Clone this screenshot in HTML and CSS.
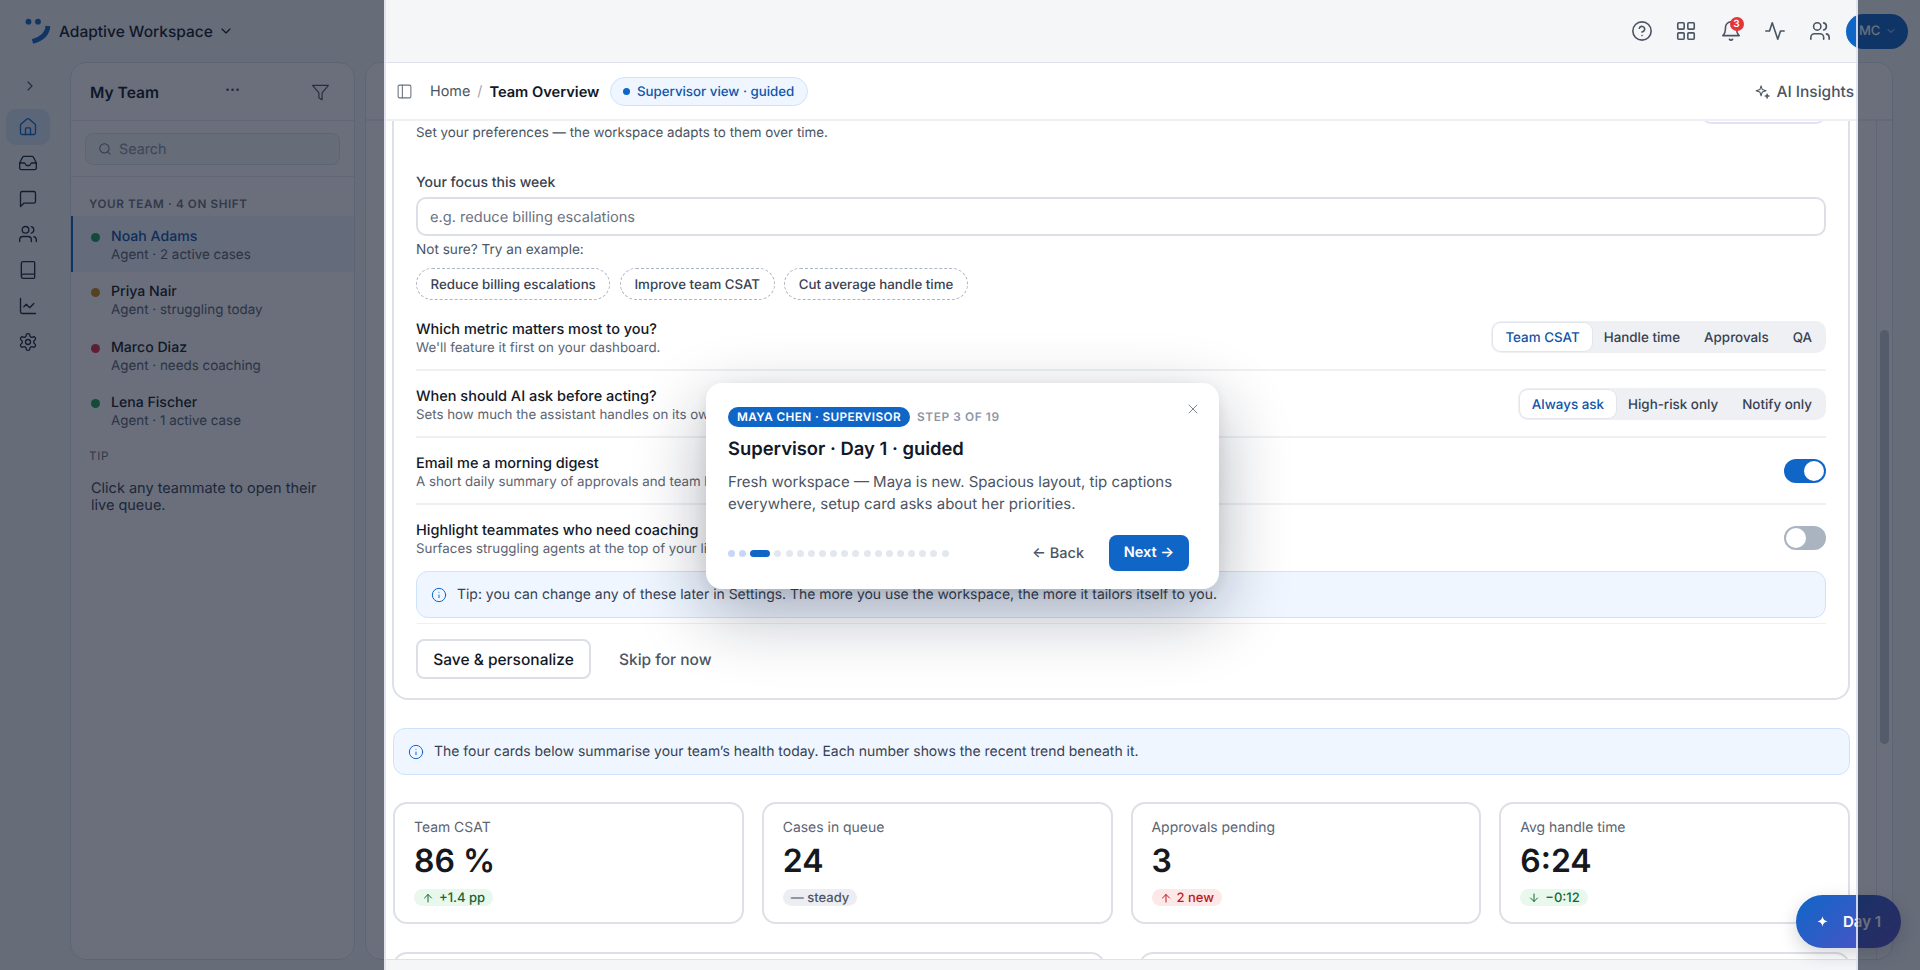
FILE: index.html
```html
<!DOCTYPE html>
<html lang="en">
<head>
<meta charset="utf-8">
<title>Adaptive Workspace</title>
<link rel="stylesheet" href="styles.css">
</head>
<body>
<div class="app">
  <header class="topbar">
    <div class="brand">
      <svg class="logo" viewBox="0 0 28 28"><circle cx="4.5" cy="4.7" r="2.9" class="fill"/><circle cx="14" cy="4.7" r="2.9" class="fill"/><path d="M24 9c-.4 7-5 12.500-15.500 15.500" class="arc"/></svg>
      <span class="brand-name">Adaptive Workspace</span>
      <svg class="ic chev" viewBox="0 0 24 24"><path d="m6 9 6 6 6-6"/></svg>
    </div>
    <div class="top-actions">
      <svg class="ic top-ic" viewBox="0 0 24 24"><circle cx="12" cy="12" r="10"/><path d="M9.090 9a3 3 0 0 1 5.830 1c0 2-3 3-3 3"/><path d="M12 17h.01"/></svg>
      <svg class="ic top-ic" viewBox="0 0 24 24"><rect x="3" y="3" width="7" height="7" rx="1"/><rect x="14" y="3" width="7" height="7" rx="1"/><rect x="14" y="14" width="7" height="7" rx="1"/><rect x="3" y="14" width="7" height="7" rx="1"/></svg>
      <span class="bell">
        <svg class="ic top-ic" viewBox="0 0 24 24"><path d="M6 8a6 6 0 0 1 12 0c0 7 3 9 3 9H3s3-2 3-9"/><path d="M10.300 21a1.940 1.940 0 0 0 3.400 0"/></svg>
        <span class="badge">3</span>
      </span>
      <svg class="ic top-ic" viewBox="0 0 24 24"><path d="M22 12h-4l-3 9L9 3l-3 9H2"/></svg>
      <svg class="ic top-ic" viewBox="0 0 24 24"><path d="M16 21v-2a4 4 0 0 0-4-4H6a4 4 0 0 0-4 4v2"/><circle cx="9" cy="7" r="4"/><path d="M22 21v-2a4 4 0 0 0-3-3.870"/><path d="M16 3.130a4 4 0 0 1 0 7.750"/></svg>
      <div class="avatar"><span>MC</span><svg class="ic" viewBox="0 0 24 24"><path d="m6 9 6 6 6-6"/></svg></div>
    </div>
  </header>

  <div class="workspace">
    <nav class="rail">
      <svg class="ic rail-toggle" viewBox="0 0 24 24"><path d="m9 18 6-6-6-6"/></svg>
      <a class="rail-item active"><svg class="ic" viewBox="0 0 24 24"><path d="M15 21v-7a1 1 0 0 0-1-1h-4a1 1 0 0 0-1 1v7"/><path d="M3 10a2 2 0 0 1 .709-1.528l7-5.999a2 2 0 0 1 2.582 0l7 5.999A2 2 0 0 1 21 10v9a2 2 0 0 1-2 2H5a2 2 0 0 1-2-2z"/></svg></a>
      <a class="rail-item"><svg class="ic" viewBox="0 0 24 24"><polyline points="22 12 16 12 14 15 10 15 8 12 2 12"/><path d="M5.450 5.110 2 12v6a2 2 0 0 0 2 2h16a2 2 0 0 0 2-2v-6l-3.450-6.890A2 2 0 0 0 16.760 4H7.240a2 2 0 0 0-1.790 1.110z"/></svg></a>
      <a class="rail-item"><svg class="ic" viewBox="0 0 24 24"><path d="M21 15a2 2 0 0 1-2 2H7l-4 4V5a2 2 0 0 1 2-2h14a2 2 0 0 1 2 2z"/></svg></a>
      <a class="rail-item"><svg class="ic" viewBox="0 0 24 24"><path d="M16 21v-2a4 4 0 0 0-4-4H6a4 4 0 0 0-4 4v2"/><circle cx="9" cy="7" r="4"/><path d="M22 21v-2a4 4 0 0 0-3-3.870"/><path d="M16 3.130a4 4 0 0 1 0 7.750"/></svg></a>
      <a class="rail-item"><svg class="ic" viewBox="0 0 24 24"><path d="M4 19.500v-15A2.500 2.500 0 0 1 6.500 2H19a1 1 0 0 1 1 1v18a1 1 0 0 1-1 1H6.500a1 1 0 0 1 0-5H20"/></svg></a>
      <a class="rail-item"><svg class="ic" viewBox="0 0 24 24"><path d="M3 3v16a2 2 0 0 0 2 2h16"/><path d="m19 9-5 5-4-4-3 3"/></svg></a>
      <a class="rail-item"><svg class="ic" viewBox="0 0 24 24"><path d="M12.220 2h-.44a2 2 0 0 0-2 2v.18a2 2 0 0 1-1 1.730l-.43.25a2 2 0 0 1-2 0l-.15-.08a2 2 0 0 0-2.730.73l-.22.38a2 2 0 0 0 .73 2.730l.15.1a2 2 0 0 1 1 1.720v.51a2 2 0 0 1-1 1.740l-.15.09a2 2 0 0 0-.73 2.730l.22.38a2 2 0 0 0 2.730.73l.15-.08a2 2 0 0 1 2 0l.43.25a2 2 0 0 1 1 1.730V20a2 2 0 0 0 2 2h.44a2 2 0 0 0 2-2v-.18a2 2 0 0 1 1-1.730l.43-.25a2 2 0 0 1 2 0l.15.08a2 2 0 0 0 2.730-.73l.22-.39a2 2 0 0 0-.73-2.730l-.15-.08a2 2 0 0 1-1-1.740v-.5a2 2 0 0 1 1-1.740l.15-.09a2 2 0 0 0 .73-2.730l-.22-.38a2 2 0 0 0-2.730-.73l-.15.08a2 2 0 0 1-2 0l-.43-.25a2 2 0 0 1-1-1.730V4a2 2 0 0 0-2-2z"/><circle cx="12" cy="12" r="3"/></svg></a>
    </nav>

    <aside class="team">
      <div class="team-head">
        <h2>My Team</h2>
        <span class="more">···</span>
        <svg class="ic filter" viewBox="0 0 24 24"><polygon points="22 3 2 3 10 12.460 10 19 14 21 14 12.460 22 3"/></svg>
      </div>
      <div class="team-search">
        <div class="search-box">
          <svg class="ic" viewBox="0 0 24 24"><circle cx="11" cy="11" r="8"/><path d="m21 21-4.300-4.300"/></svg>
          <span>Search</span>
        </div>
      </div>
      <div class="section-label">YOUR TEAM · 4 ON SHIFT</div>
      <div class="member selected"><i class="dot green"></i><div><b>Noah Adams</b><small>Agent · 2 active cases</small></div></div>
      <div class="member"><i class="dot amber"></i><div><b>Priya Nair</b><small>Agent · struggling today</small></div></div>
      <div class="member"><i class="dot red"></i><div><b>Marco Diaz</b><small>Agent · needs coaching</small></div></div>
      <div class="member"><i class="dot green"></i><div><b>Lena Fischer</b><small>Agent · 1 active case</small></div></div>
      <div class="tip-label">TIP</div>
      <p class="tip-text">Click any teammate to open their live queue.</p>
    </aside>

    <main class="main">
      <div class="main-head">
        <svg class="ic panel-ic" viewBox="0 0 24 24"><rect x="3" y="3" width="18" height="18" rx="2"/><path d="M9 3v18"/></svg>
        <span class="crumb">Home</span>
        <span class="slash">/</span>
        <span class="crumb-now">Team Overview</span>
        <span class="view-pill"><i></i>Supervisor view · guided</span>
        <span class="insights">
          <svg class="ic" viewBox="0 0 24 24"><path d="m10 4 1.700 5.300L17 11l-5.300 1.700L10 18l-1.700-5.300L3 11l5.300-1.700z"/><path d="m18.500 15.500.7 2.300 2.300.7-2.300.7-.7 2.300-.7-2.300-2.300-.7 2.300-.7z"/></svg>
          AI Insights
        </span>
      </div>
      <div class="main-body">
        <div class="scroller">
          <section class="setup">
            <div class="setup-head">
              <p>Set your preferences — the workspace adapts to them over time.</p>
              <span class="setup-btn"></span>
            </div>
            <label class="field-label">Your focus this week</label>
            <div class="text-input">e.g. reduce billing escalations</div>
            <div class="hint">Not sure? Try an example:</div>
            <div class="chips">
              <span class="chip">Reduce billing escalations</span>
              <span class="chip">Improve team CSAT</span>
              <span class="chip">Cut average handle time</span>
            </div>
            <div class="pref">
              <div><h4>Which metric matters most to you?</h4><p>We'll feature it first on your dashboard.</p></div>
              <div class="seg"><span class="on">Team CSAT</span><span>Handle time</span><span>Approvals</span><span>QA</span></div>
            </div>
            <div class="pref">
              <div><h4>When should AI ask before acting?</h4><p>Sets how much the assistant handles on its own.</p></div>
              <div class="seg"><span class="on">Always ask</span><span>High-risk only</span><span>Notify only</span></div>
            </div>
            <div class="pref">
              <div><h4>Email me a morning digest</h4><p>A short daily summary of approvals and team health.</p></div>
              <span class="toggle on"><i></i></span>
            </div>
            <div class="pref last">
              <div><h4>Highlight teammates who need coaching</h4><p>Surfaces struggling agents at the top of your list.</p></div>
              <span class="toggle"><i></i></span>
            </div>
            <div class="note">
              <svg class="ic" viewBox="0 0 24 24"><circle cx="12" cy="12" r="10"/><path d="M12 16v-4"/><path d="M12 8h.01"/></svg>
              Tip: you can change any of these later in Settings. The more you use the workspace, the more it tailors itself to you.
            </div>
            <div class="setup-actions">
              <span class="btn-save">Save &amp; personalize</span>
              <span class="btn-skip">Skip for now</span>
            </div>
          </section>

          <div class="note wide">
            <svg class="ic" viewBox="0 0 24 24"><circle cx="12" cy="12" r="10"/><path d="M12 16v-4"/><path d="M12 8h.01"/></svg>
            The four cards below summarise your team’s health today. Each number shows the recent trend beneath it.
          </div>

          <div class="kpis">
            <div class="kpi"><span class="kpi-label">Team CSAT</span><strong>86 %</strong><span class="trend good"><svg class="ic" viewBox="0 0 24 24"><path d="M12 20V5"/><path d="m5 12 7-7 7 7"/></svg>+1.4 pp</span></div>
            <div class="kpi"><span class="kpi-label">Cases in queue</span><strong>24</strong><span class="trend flat">— steady</span></div>
            <div class="kpi"><span class="kpi-label">Approvals pending</span><strong>3</strong><span class="trend bad"><svg class="ic" viewBox="0 0 24 24"><path d="M12 20V5"/><path d="m5 12 7-7 7 7"/></svg>2 new</span></div>
            <div class="kpi"><span class="kpi-label">Avg handle time</span><strong>6:24</strong><span class="trend good"><svg class="ic" viewBox="0 0 24 24"><path d="M12 4v15"/><path d="m5 12 7 7 7-7"/></svg>−0:12</span></div>
          </div>

          <div class="lower">
            <div class="lower-card"></div>
            <div class="lower-card"></div>
          </div>
        </div>
        <div class="gutter"><span class="thumb"></span></div>
      </div>
    </main>
  </div>
</div>

<button class="fab">
  <svg viewBox="0 0 24 24"><path d="M12 2.500c.8 5.700 3.800 8.700 9.500 9.500-5.700.8-8.700 3.800-9.500 9.500-.8-5.700-3.800-8.700-9.500-9.500 5.700-.8 8.700-3.800 9.500-9.500z"/></svg>
  Day 1
</button>

<div class="spotlight"></div>

<div class="coach">
  <button class="coach-close"><svg class="ic" viewBox="0 0 24 24"><path d="M18 6 6 18"/><path d="m6 6 12 12"/></svg></button>
  <div class="coach-tags"><span class="persona">MAYA CHEN · SUPERVISOR</span><span class="step">STEP 3 OF 19</span></div>
  <h3>Supervisor · Day 1 · guided</h3>
  <p>Fresh workspace — Maya is new. Spacious layout, tip captions everywhere, setup card asks about her priorities.</p>
  <div class="coach-foot">
    <div class="dots"><i class="done"></i><i class="done"></i><i class="cur"></i><i></i><i></i><i></i><i></i><i></i><i></i><i></i><i></i><i></i><i></i><i></i><i></i><i></i><i></i><i></i><i></i></div>
    <span class="back">← Back</span>
    <span class="next">Next →</span>
  </div>
</div>
</body>
</html>
```

FILE: styles.css
```css
* { box-sizing: border-box; }
html, body { margin: 0; height: 100%; overflow: hidden; }
body { background: #f5f6f8; color: #111827; font-family: Inter, "Liberation Sans", sans-serif; font-size: 14px; position: relative; text-rendering: geometricPrecision; }
h2, h3, h4, p { margin: 0; }
button { font: inherit; border: 0; background: none; padding: 0; }
.ic { fill: none; stroke: currentColor; stroke-width: 1.75; stroke-linecap: round; stroke-linejoin: round; display: block; flex: none; }

.app { height: 970px; display: flex; flex-direction: column; }
.topbar { height: 62px; flex: none; display: flex; align-items: center; justify-content: space-between; padding: 0 12px 0 24px; }
.brand { display: flex; align-items: center; }
.logo { width: 28px; height: 28px; margin-right: 7px; margin-top: -1px; }
.logo .fill { fill: #0f66c7; }
.logo .arc { fill: none; stroke: #0f66c7; stroke-width: 4.6; }
.brand-name { font-size: 15.500px; font-weight: 500; color: #111827; }
.chev { width: 16px; height: 16px; margin-left: 5px; color: #111827; }
.top-actions { display: flex; align-items: center; color: #4b5563; }
.top-ic { width: 22px; height: 22px; margin-right: 22.500px; }
.bell { position: relative; display: block; }
.badge { position: absolute; left: 10px; top: -3px; width: 14px; height: 14px; border-radius: 50%; background: #e5343a; color: #fff; font-size: 10px; font-weight: 600; line-height: 14px; text-align: center; }
.avatar { width: 62px; height: 35px; margin-left: -7px; border-radius: 18px; background: #0f66c7; color: #fff; display: flex; align-items: center; gap: 5px; padding-left: 13px; font-size: 13px; font-weight: 500; }
.avatar .ic { width: 12px; height: 12px; }

.workspace { flex: 1; min-height: 0; display: flex; padding: 0 27px 10px 0; }
.rail { width: 70px; flex: none; display: flex; flex-direction: column; align-items: flex-start; padding: 16px 0 0 6px; color: #1f2937; }
.rail-toggle { width: 16px; height: 16px; margin: 0 0 15px 16px; color: #4b5563; }
.rail-item { width: 44px; height: 36px; border-radius: 10px; display: flex; align-items: center; justify-content: center; margin-bottom: -0.200px; }
.rail-item .ic { width: 20px; height: 20px; stroke-width: 1.6; }
.rail-item.active { background: #d9e6f9; color: #0f66c7; }

.team { width: 285px; flex: none; margin-right: 10px; background: #fff; border: 1px solid #e0e3ea; border-radius: 16px; overflow: hidden; }
.team-head { height: 58px; display: flex; align-items: center; padding: 1px 24px 0 19px; border-bottom: 1px solid #e8eaef; position: relative; }
.team-head h2 { font-size: 15.600px; font-weight: 600; color: #111827; }
.more { position: absolute; left: 154px; top: 17px; color: #4b5563; font-size: 15px; font-weight: 700; letter-spacing: 0; }
.filter { width: 19px; height: 19px; margin-left: auto; color: #4b5563; stroke-width: 1.500; }
.team-search { height: 56px; padding: 12px 14px 0; border-bottom: 1px solid #e8eaef; }
.search-box { height: 32px; border: 1px solid #dfe2e9; border-radius: 8px; background: #f5f6f8; display: flex; align-items: center; gap: 7px; padding-left: 12px; color: #8b93a1; font-size: 14.300px; }
.search-box .ic { width: 14px; height: 14px; color: #6b7280; }
.section-label { height: 39px; padding: 19px 0 0 18px; font-size: 11.700px; font-weight: 600; letter-spacing: .6px; color: #6b7280; line-height: 17px; }
.member { height: 55.500px; display: flex; align-items: center; padding-left: 18px; gap: 11px; border-left: 2px solid transparent; margin-left: 0; }
.member.selected { background: #eef4fd; border-left-color: #0f66c7; height: 56px; }
.member > div { padding-top: 4px; }
.member b { display: block; font-size: 14.100px; font-weight: 500; line-height: 18px; color: #111827; }
.member.selected b { color: #0f55a8; }
.member small { display: block; font-size: 13.400px; line-height: 19px; color: #5b6472; }
.dot { width: 9px; height: 9px; border-radius: 50%; flex: none; margin-top: -14px; }
.green { background: #1f9d55; }
.amber { background: #c98a1a; }
.red { background: #dc2f45; }
.tip-label { margin: 9px 0 0 18px; font-size: 11.700px; letter-spacing: .6px; color: #6b7280; line-height: 17px; }
.tip-text { margin: 15px 30px 0 20px; font-size: 14.500px; line-height: 17.500px; color: #374151; }

.main { flex: 1; min-width: 0; background: #fff; border: 1px solid #dfe2ea; border-radius: 16px; overflow: hidden; display: flex; flex-direction: column; }
.main-head { height: 58px; flex: none; display: flex; align-items: center; border-bottom: 2px solid #eef0f4; padding: 1px 38px 0 30px; background: #fff; }
.panel-ic { width: 17px; height: 17px; color: #6b7280; margin-right: 17px; stroke-width: 1.500; }
.crumb { color: #4b5563; font-size: 14.400px; }
.slash { color: #9ca3af; margin: 0 7px; }
.crumb-now { font-size: 14.650px; font-weight: 600; color: #111827; }
.view-pill { margin-left: 10.500px; height: 29px; padding: 0 12.500px 0 12px; border-radius: 15px; background: #eff6ff; border: 1px solid #cfe2fb; color: #0f55a8; display: flex; align-items: center; gap: 7px; font-size: 13.300px; font-weight: 500; }
.view-pill i { width: 7px; height: 7px; border-radius: 50%; background: #0f66c7; }
.insights { margin-left: auto; display: flex; align-items: center; gap: 5px; color: #4b5563; font-size: 15.500px; font-weight: 500; }
.insights .ic { width: 17px; height: 17px; stroke-width: 1.500; }

.main-body { flex: 1; min-height: 0; display: flex; }
.scroller { flex: 1; min-width: 0; overflow: hidden; padding: 0 26px 0 27px; }
.gutter { width: 16px; flex: none; border-left: 1px solid #e6e8ee; padding: 209px 0 0 3px; }
.thumb { display: block; width: 9px; height: 414px; border-radius: 5px; background: #c6cad2; }

.setup { margin-top: -60px; border: 2px solid #dde0e7; border-radius: 16px; padding: 21px 22px 19px; margin-left: -1px; }
.setup-head { display: flex; justify-content: space-between; align-items: flex-start; height: 58px; }
.setup-head p { margin-top: 39px; font-size: 13.400px; line-height: 20px; color: #4b5563; }
.setup-btn { height: 40px; width: 125px; border: 2px solid #e3e1f6; border-radius: 10px; }
.field-label { display: block; margin-top: 32px; font-size: 14px; line-height: 18px; color: #374151; font-weight: 500; }
.text-input { margin-top: 5px; height: 39px; border: 2px solid #dcdfe6; border-radius: 10px; padding-left: 12px; font-size: 14.600px; line-height: 36px; color: #6b7280; }
.hint { margin-top: 6px; font-size: 13.600px; line-height: 17px; color: #4b5563; }
.chips { margin-top: 9px; display: flex; gap: 9.500px; height: 32px; }
.chip { height: 32px; padding: 0 13.600px; border: 1px dashed #aeb5c2; border-radius: 16px; font-size: 13.300px; line-height: 32px; color: #374151; font-weight: 500; }
.pref { height: 67px; display: flex; align-items: center; justify-content: space-between; border-bottom: 2px solid #eef0f4; }
.pref > div:first-child { padding-top: 4px; }
.chips + .pref { margin-top: 4px; }
.pref.last { border-bottom: 0; height: 66px; }
.pref h4 { font-size: 14.500px; font-weight: 500; line-height: 18px; color: #111827; }
.pref p { font-size: 13.300px; line-height: 18px; color: #5b6472; }
.seg { height: 32px; background: #eef0f4; border-radius: 10px; padding: 2px; display: flex; font-size: 13.400px; font-weight: 500; color: #374151; }
.seg span { padding: 0 12px; line-height: 30px; height: 28px; border-radius: 8px; }
.seg .on { background: #fff; color: #0f55a8; box-shadow: 0 0 0 1px #e2e5ec; }
.toggle { width: 42px; height: 24px; border-radius: 12px; background: #aab3c0; padding: 2px; display: flex; }
.toggle i { width: 20px; height: 20px; background: #fff; border-radius: 50%; }
.toggle.on { background: #0f66c7; justify-content: flex-end; }

.note { height: 47px; border: 1px solid #cfe2fb; border-radius: 12px; background: #eff6ff; display: flex; align-items: center; gap: 10px; padding-left: 14px; font-size: 13.950px; color: #374151; }
.note .ic { width: 16px; height: 16px; color: #0f66c7; stroke-width: 1.500; }
.setup-actions { margin-top: 5px; border-top: 1px solid #eef0f4; padding-top: 15px; display: flex; align-items: center; gap: 28px; }
.btn-save { height: 40px; width: 175px; border: 2px solid #dcdfe6; border-radius: 8px; text-align: center; font-size: 15.500px; font-weight: 500; line-height: 37px; color: #111827; }
.btn-skip { font-size: 15.500px; font-weight: 500; color: #4b5563; }
.note.wide { margin: 28px 0 27px 0; }
.kpis { display: grid; grid-template-columns: repeat(4, 1fr); gap: 18px; }
.kpi { height: 122px; border: 2px solid #dde0e7; border-radius: 14px; padding: 14px 19px; display: flex; flex-direction: column; align-items: flex-start; }
.kpi-label { font-size: 13.950px; line-height: 20px; color: #5b6472; }
.kpi strong { font-size: 32px; font-weight: 600; line-height: 38px; margin-top: 4px; color: #16181d; }
.trend { margin-top: 9px; height: 17px; border-radius: 9px; padding: 0 8px; display: flex; align-items: center; gap: 5px; font-size: 13px; font-weight: 500; }
.trend .ic { width: 12px; height: 12px; stroke-width: 2; }
.good { background: #e9f8ec; color: #166534; }
.flat { background: #eceef3; color: #4b5563; }
.bad { background: #fde8e8; color: #b91c1c; }
.lower { margin-top: 28px; display: grid; grid-template-columns: 1fr 1fr; gap: 34px; }
.lower-card { height: 200px; border: 2px solid #dde0e7; border-radius: 14px; }

.fab { position: absolute; left: 1796px; top: 895px; width: 105px; height: 53px; border-radius: 27px; background: linear-gradient(135deg, #0f66c7, #5a4fc6); color: #fff; display: flex; align-items: center; gap: 14px; padding-left: 20px; font-size: 15px; font-weight: 600; box-shadow: 0 6px 18px rgba(15,23,42,.18); }
.fab svg { width: 13px; height: 13px; fill: #fff; flex: none; }

.spotlight { position: absolute; left: 384px; top: -4px; width: 1474px; height: 978px; border: 2px solid rgba(222,225,238,.9); box-shadow: 0 0 0 3000px rgba(15,23,42,.62); pointer-events: none; }

.coach { position: absolute; left: 706px; top: 383px; width: 513px; height: 206px; background: #fff; border-radius: 16px; padding: 24px 22px; box-shadow: 0 24px 70px rgba(15,23,42,.32), 0 4px 14px rgba(15,23,42,.08); }
.coach-close { position: absolute; right: 18px; top: 18px; color: #7b8494; }
.coach-close .ic { width: 16px; height: 16px; stroke-width: 1.500; }
.coach-tags { display: flex; align-items: center; gap: 7px; }
.persona { height: 20px; padding: 0 9px; border-radius: 10px; background: #0f66c7; color: #fff; font-size: 11.760px; font-weight: 600; line-height: 20px; letter-spacing: .4px; }
.step { color: #8c96a8; font-size: 11.850px; font-weight: 600; letter-spacing: .6px; }
.coach h3 { margin-top: 10px; font-size: 18.400px; font-weight: 600; line-height: 24px; color: #111827; }
.coach p { margin-top: 10px; font-size: 15px; line-height: 22px; color: #4b5563; }
.coach-foot { margin-top: 20px; display: flex; align-items: center; }
.dots { display: flex; gap: 4.150px; }
.dots i { width: 7px; height: 7px; border-radius: 50%; background: #e3e7ee; }
.dots .done { background: #c8d6f8; }
.dots .cur { width: 20px; border-radius: 4px; background: #0f66c7; }
.back { margin-left: auto; color: #4b5563; font-size: 14.500px; font-weight: 500; }
.next { margin-left: 25px; margin-right: 8px; height: 36px; width: 80px; border-radius: 8px; background: #0f66c7; color: #fff; text-align: center; line-height: 36px; font-size: 14.500px; font-weight: 600; }
```
